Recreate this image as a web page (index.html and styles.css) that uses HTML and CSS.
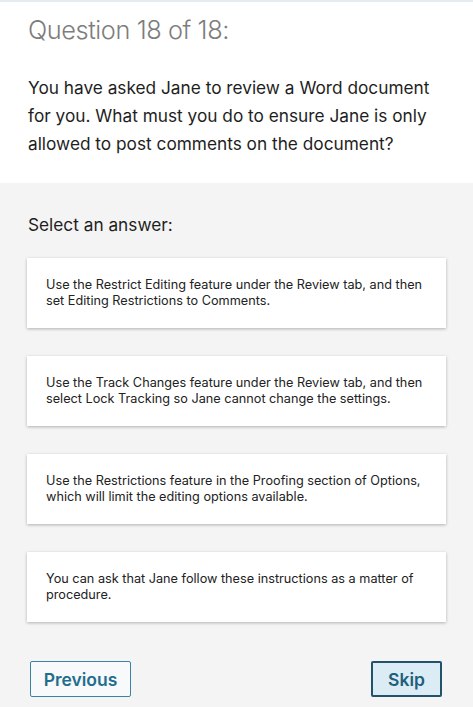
FILE: index.html
```html
<!DOCTYPE html>
<html>
<head>
<meta charset="utf-8">
<link rel="stylesheet" href="styles.css">
</head>
<body>
<div class="page">
  <header class="question">
    <h1 class="title">Question 18 of 18:</h1>
    <p class="prompt">You have asked Jane to review a Word document for you. What must you do to ensure Jane is only allowed to post comments on the document?</p>
  </header>
  <section class="answers">
    <h2 class="select">Select an answer:</h2>
    <div class="list">
      <div class="card">Use the Restrict Editing feature under the Review tab, and then set Editing Restrictions to Comments.</div>
      <div class="card">Use the Track Changes feature under the Review tab, and then select Lock Tracking so Jane cannot change the settings.</div>
      <div class="card">Use the Restrictions feature in the Proofing section of Options, which will limit the editing options available.</div>
      <div class="card">You can ask that Jane follow these instructions as a matter of procedure.</div>
    </div>
    <div class="nav">
      <button class="btn prev">Previous</button>
      <button class="btn skip">Skip</button>
    </div>
  </section>
</div>
</body>
</html>
```
FILE: styles.css
```css
html, body {
  margin: 0;
  padding: 0;
}
body {
  font-family: Inter, "Noto Sans", sans-serif;
  background: #f4f4f4;
  color: #222;
}
.page {
  width: 473px;
  height: 707px;
  overflow: hidden;
  display: flex;
  flex-direction: column;
}
.question {
  background: #fff;
  border-top: 2px solid #e6ebf3;
  padding: 12px 20px 25px 28px;
}
.title {
  margin: 0;
  font-weight: 300;
  font-size: 25.3px;
  line-height: 32px;
  color: #7d7d7d;
  letter-spacing: -0.4px;
}
.prompt {
  margin: 28px 0 0 0;
  font-size: 17.25px;
  line-height: 28px;
  color: #1e1e1e;
  font-weight: 400;
}
.answers {
  flex: 1;
  background: #f4f4f4;
  padding: 30px 27px 0 27px;
}
.select {
  margin: 0 0 0 1px;
  font-size: 17.25px;
  font-weight: 400;
  line-height: 24px;
  color: #1e1e1e;
}
.list {
  margin-top: 21px;
  display: flex;
  flex-direction: column;
  gap: 28px;
}
.card {
  background: #fff;
  height: 70px;
  box-sizing: border-box;
  padding: 0 20px 0 19px;
  font-size: 12.7px;
  line-height: 16px;
  color: #222;
  box-shadow: 0 1px 3px rgba(0,0,0,0.28);
  display: flex;
  align-items: center;
}
.nav {
  margin-top: 39px;
  display: flex;
  justify-content: space-between;
  padding: 0 4px 0 3px;
}
.btn {
  font-family: Inter, "Noto Sans", sans-serif;
  font-weight: 600;
  font-size: 17.5px;
  height: 36px;
  padding: 0;
  border-radius: 2px;
  color: #1f6e8e;
  cursor: pointer;
}
.prev {
  background: #f7f9fa;
  border: 1.5px solid #3a84a2;
  width: 101px;
}
.skip {
  background: #dcecf4;
  border: 2px solid #22536a;
  color: #1e5f7d;
  width: 71px;
}
```
